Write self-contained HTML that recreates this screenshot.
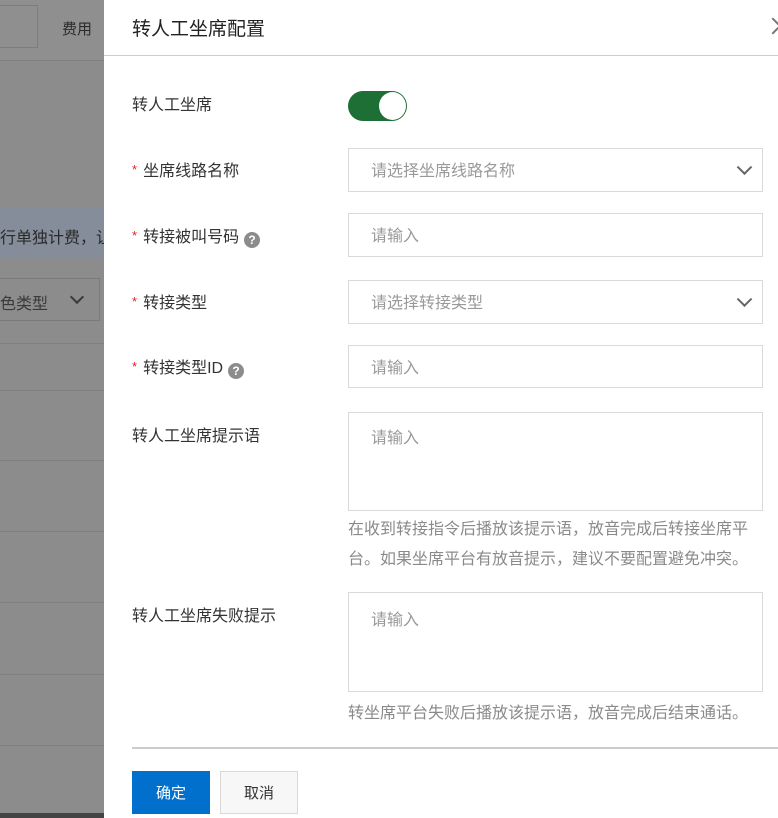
<!DOCTYPE html>
<html><head><meta charset="utf-8"><style>
*{margin:0;padding:0;box-sizing:border-box}
body{width:778px;height:818px;overflow:hidden;position:relative;background:#8c8c8c;font-family:"Liberation Sans","Noto Sans CJK SC",sans-serif;color:#333}
.abs{position:absolute}
.lbl{position:absolute;left:132px;font-size:16px;color:#333;line-height:20px}
.req{color:#e02020;font-size:13px;margin-right:6px;position:relative;top:-2px}
.inp{position:absolute;left:348px;width:415px;border:1px solid #d9d9d9;background:#fff;font-size:16px;color:#999;padding-left:22px}
.q{display:inline-block;width:16px;height:16px;border-radius:50%;background:#8c8c8c;color:#fff;font-size:12px;font-weight:bold;text-align:center;line-height:16px;margin-left:5px;vertical-align:-2px}
.chev{position:absolute;right:12px;top:50%;width:11px;height:11px;border-right:2px solid #666;border-bottom:2px solid #666;transform:translateY(-75%) rotate(45deg)}
.help{position:absolute;left:348px;width:420px;font-size:16px;color:#8a8a8a;line-height:30px}
</style></head><body>
<div class="abs" style="left:0;top:0;width:105px;height:60px;background:#8f8f8f"></div>
<div class="abs" style="left:-5px;top:5px;width:43px;height:43px;border:1px solid #7d7d7d"></div>
<div class="abs" style="left:62px;top:18px;font-size:15px;color:#2a2a2a">费用</div>
<div class="abs" style="left:0;top:60px;width:105px;height:1px;background:#808080"></div>
<div class="abs" style="left:0;top:207px;width:105px;height:50px;background:#848d99"></div>
<div class="abs" style="left:0;top:224px;font-size:16px;color:#2a2a2a;white-space:nowrap">行单独计费，让</div>
<div class="abs" style="left:-3px;top:278px;width:103px;height:43px;border:1px solid #7a7a7a"></div>
<div class="abs" style="left:0;top:290px;font-size:16px;color:#3a3a3a">色类型</div>
<div class="abs" style="left:72px;top:292px;width:10px;height:10px;border-right:2px solid #3a3a3a;border-bottom:2px solid #3a3a3a;transform:rotate(45deg)"></div>
<div class="abs" style="left:0;top:343px;width:105px;height:1px;background:#808080"></div>
<div class="abs" style="left:0;top:390px;width:105px;height:1px;background:#808080"></div>
<div class="abs" style="left:0;top:460px;width:105px;height:1px;background:#808080"></div>
<div class="abs" style="left:0;top:531px;width:105px;height:1px;background:#808080"></div>
<div class="abs" style="left:0;top:602px;width:105px;height:1px;background:#808080"></div>
<div class="abs" style="left:0;top:674px;width:105px;height:1px;background:#808080"></div>
<div class="abs" style="left:0;top:745px;width:105px;height:1px;background:#808080"></div>
<div class="abs" style="left:0;top:813px;width:105px;height:5px;background:#444"></div>

<div class="abs" style="left:104px;top:0;width:674px;height:818px;background:#fff"></div>
<div class="abs" style="left:132px;top:14px;font-size:19px;color:#222">转人工坐席配置</div>
<div class="abs" style="left:767px;top:20px;width:12px;height:12px;border-right:2px solid #777;border-top:2px solid #777;transform:rotate(45deg)"></div>
<div class="abs" style="left:104px;top:55px;width:674px;height:1px;background:#ccc"></div>

<div class="lbl" style="top:96px">转人工坐席</div>
<div class="abs" style="left:348px;top:91px;width:59px;height:30px;border-radius:15px;background:#1e6f35"></div>
<div class="abs" style="left:379px;top:92px;width:27px;height:28px;border-radius:50%;background:#fff"></div>

<div class="lbl" style="top:162px"><span class="req">*</span>坐席线路名称</div>
<div class="inp" style="top:148px;height:44px;line-height:46px">请选择坐席线路名称<span class="chev"></span></div>

<div class="lbl" style="top:228px"><span class="req">*</span>转接被叫号码<span class="q">?</span></div>
<div class="inp" style="top:213px;height:44px;line-height:46px">请输入</div>

<div class="lbl" style="top:294px"><span class="req">*</span>转接类型</div>
<div class="inp" style="top:280px;height:44px;line-height:46px">请选择转接类型<span class="chev"></span></div>

<div class="lbl" style="top:359px"><span class="req">*</span>转接类型ID<span class="q">?</span></div>
<div class="inp" style="top:345px;height:43px;line-height:45px">请输入</div>

<div class="lbl" style="top:427px">转人工坐席提示语</div>
<div class="inp" style="top:412px;height:99px;padding-top:16px;line-height:20px">请输入</div>
<div class="help" style="top:515px">在收到转接指令后播放该提示语，放音完成后转接坐席平台。如果坐席平台有放音提示，建议不要配置避免冲突。</div>

<div class="lbl" style="top:607px">转人工坐席失败提示</div>
<div class="inp" style="top:592px;height:100px;padding-top:18px;line-height:20px">请输入</div>
<div class="help" style="top:699px">转坐席平台失败后播放该提示语，放音完成后结束通话。</div>

<div class="abs" style="left:132px;top:747px;width:646px;height:2px;background:#ccc"></div>
<div class="abs" style="left:132px;top:771px;width:78px;height:43px;background:#0070cc;color:#fff;font-size:15px;text-align:center;line-height:45px">确定</div>
<div class="abs" style="left:220px;top:771px;width:78px;height:43px;border:1px solid #d9d9d9;background:#f7f7f7;color:#333;font-size:15px;text-align:center;line-height:43px">取消</div>
</body></html>
